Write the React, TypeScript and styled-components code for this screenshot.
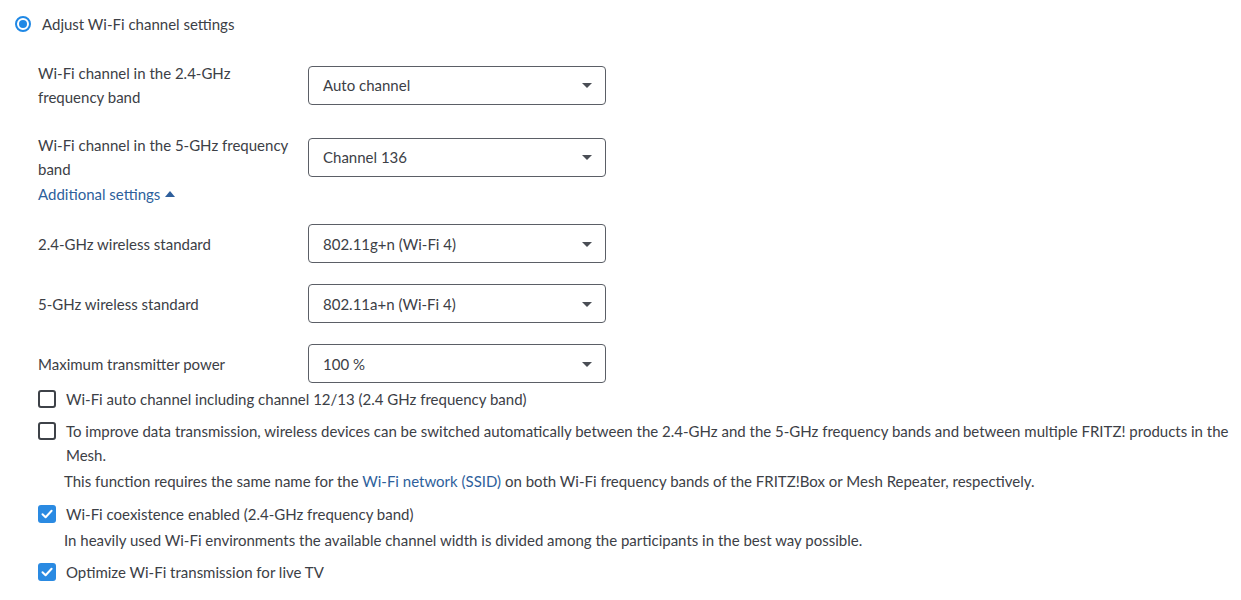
import React from "react";
import styled, { createGlobalStyle } from "styled-components";

const GlobalStyle = createGlobalStyle`
  html, body { margin: 0; padding: 0; background: #ffffff; }
  body {
    font-family: Lato, "Noto Sans", Arial, sans-serif;
    font-size: 15px;
    line-height: 24px;
    color: #3c4046;
  }
`;

const Page = styled.div`
  width: 1241px;
  height: 600px;
  overflow: hidden;
  box-sizing: border-box;
  padding: 12px 0 0 0;
`;

const RadioRow = styled.label`
  display: flex;
  align-items: center;
  gap: 11px;
  padding-left: 15px;
  height: 24px;
`;

const RadioCircle = styled.span`
  width: 16px;
  height: 16px;
  box-sizing: border-box;
  border: 2px solid #1f88e5;
  border-radius: 50%;
  display: flex;
  align-items: center;
  justify-content: center;
  &::after {
    content: "";
    width: 8px;
    height: 8px;
    border-radius: 50%;
    background: #1f88e5;
  }
`;

const Settings = styled.div`
  padding-left: 38px;
  margin-top: 25px;
  display: flex;
  flex-direction: column;
`;

const FieldRow = styled.div<{ $gap: number }>`
  display: grid;
  grid-template-columns: 252px 298px;
  column-gap: 18px;
  align-items: center;
  margin-top: ${(p) => p.$gap}px;
`;

const FieldLabel = styled.div``;

const SelectBox = styled.div`
  position: relative;
  height: 39px;
  box-sizing: border-box;
  border: 1px solid #5b5f66;
  border-radius: 4px;
  display: flex;
  align-items: center;
  padding: 0 40px 0 14px;
  color: #3c4046;
  background: #fff;
`;

const Caret = styled.span`
  position: absolute;
  right: 13px;
  top: 50%;
  margin-top: -2px;
  width: 0;
  height: 0;
  border-left: 5.5px solid transparent;
  border-right: 5.5px solid transparent;
  border-top: 5px solid #4a4e55;
`;

const ToggleRow = styled.div`
  margin-top: 1px;
`;

const ToggleLink = styled.a`
  color: #2e5f9c;
  text-decoration: none;
  display: inline-flex;
  align-items: center;
  gap: 5px;
  height: 24px;
`;

const CaretUp = styled.span`
  width: 0;
  height: 0;
  border-left: 5px solid transparent;
  border-right: 5px solid transparent;
  border-bottom: 6px solid #2e5f9c;
  margin-top: -1px;
`;

const Checks = styled.div`
  display: flex;
  flex-direction: column;
  margin-top: 4px;
`;

const CheckItem = styled.div<{ $gap: number }>`
  display: grid;
  grid-template-columns: 18px 1fr;
  column-gap: 10px;
  margin-top: ${(p) => p.$gap}px;
`;

const Box = styled.span<{ $checked?: boolean }>`
  width: 18px;
  height: 18px;
  box-sizing: border-box;
  margin-top: 3px;
  border-radius: 3px;
  border: ${(p) => (p.$checked ? "none" : "2px solid #3e4248")};
  background: ${(p) => (p.$checked ? "#2a8ae2" : "#fff")};
  display: flex;
  align-items: center;
  justify-content: center;
`;

const CheckText = styled.div``;

const Hint = styled.div`
  grid-column: 2;
  margin-left: -2px;
  margin-top: 2px;
`;

const Link = styled.a`
  color: #2e5f9c;
  text-decoration: none;
`;

function Select({ value }: { value: string }) {
  return (
    <SelectBox>
      {value}
      <Caret />
    </SelectBox>
  );
}

function Check({ checked, gap, children, hint }: { checked?: boolean; gap: number; children: React.ReactNode; hint?: React.ReactNode }) {
  return (
    <CheckItem $gap={gap}>
      <Box $checked={checked}>
        {checked && (
          <svg width="14" height="14" viewBox="0 0 14 14">
            <path d="M2.5 7.2 L5.6 10.2 L11.6 3.8" fill="none" stroke="#fff" strokeWidth="2" strokeLinecap="round" strokeLinejoin="round" />
          </svg>
        )}
      </Box>
      <CheckText>{children}</CheckText>
      {hint && <Hint>{hint}</Hint>}
    </CheckItem>
  );
}

export default function App() {
  return (
    <>
      <GlobalStyle />
      <Page>
        <RadioRow>
          <RadioCircle />
          Adjust Wi-Fi channel settings
        </RadioRow>
        <Settings>
          <FieldRow $gap={0}>
            <FieldLabel>Wi-Fi channel in the 2.4-GHz frequency band</FieldLabel>
            <Select value="Auto channel" />
          </FieldRow>
          <FieldRow $gap={24}>
            <FieldLabel>Wi-Fi channel in the 5-GHz frequency band</FieldLabel>
            <Select value="Channel 136" />
          </FieldRow>
          <ToggleRow>
            <ToggleLink>
              Additional settings
              <CaretUp />
            </ToggleLink>
          </ToggleRow>
          <FieldRow $gap={18}>
            <FieldLabel>2.4-GHz wireless standard</FieldLabel>
            <Select value="802.11g+n (Wi-Fi 4)" />
          </FieldRow>
          <FieldRow $gap={21}>
            <FieldLabel>5-GHz wireless standard</FieldLabel>
            <Select value="802.11a+n (Wi-Fi 4)" />
          </FieldRow>
          <FieldRow $gap={21}>
            <FieldLabel>Maximum transmitter power</FieldLabel>
            <Select value="100 %" />
          </FieldRow>
          <Checks>
            <Check gap={0}>Wi-Fi auto channel including channel 12/13 (2.4 GHz frequency band)</Check>
            <Check
              gap={8}
              hint={
                <>
                  This function requires the same name for the <Link>Wi-Fi network (SSID)</Link> on both Wi-Fi frequency bands of the FRITZ!Box or Mesh Repeater, respectively.
                </>
              }
            >
              To improve data transmission, wireless devices can be switched automatically between the 2.4-GHz and the 5-GHz frequency bands and between multiple FRITZ! products in the Mesh.
            </Check>
            <Check
              checked
              gap={9}
              hint="In heavily used Wi-Fi environments the available channel width is divided among the participants in the best way possible."
            >
              Wi-Fi coexistence enabled (2.4-GHz frequency band)
            </Check>
            <Check checked gap={8}>Optimize Wi-Fi transmission for live TV</Check>
          </Checks>
        </Settings>
      </Page>
    </>
  );
}
